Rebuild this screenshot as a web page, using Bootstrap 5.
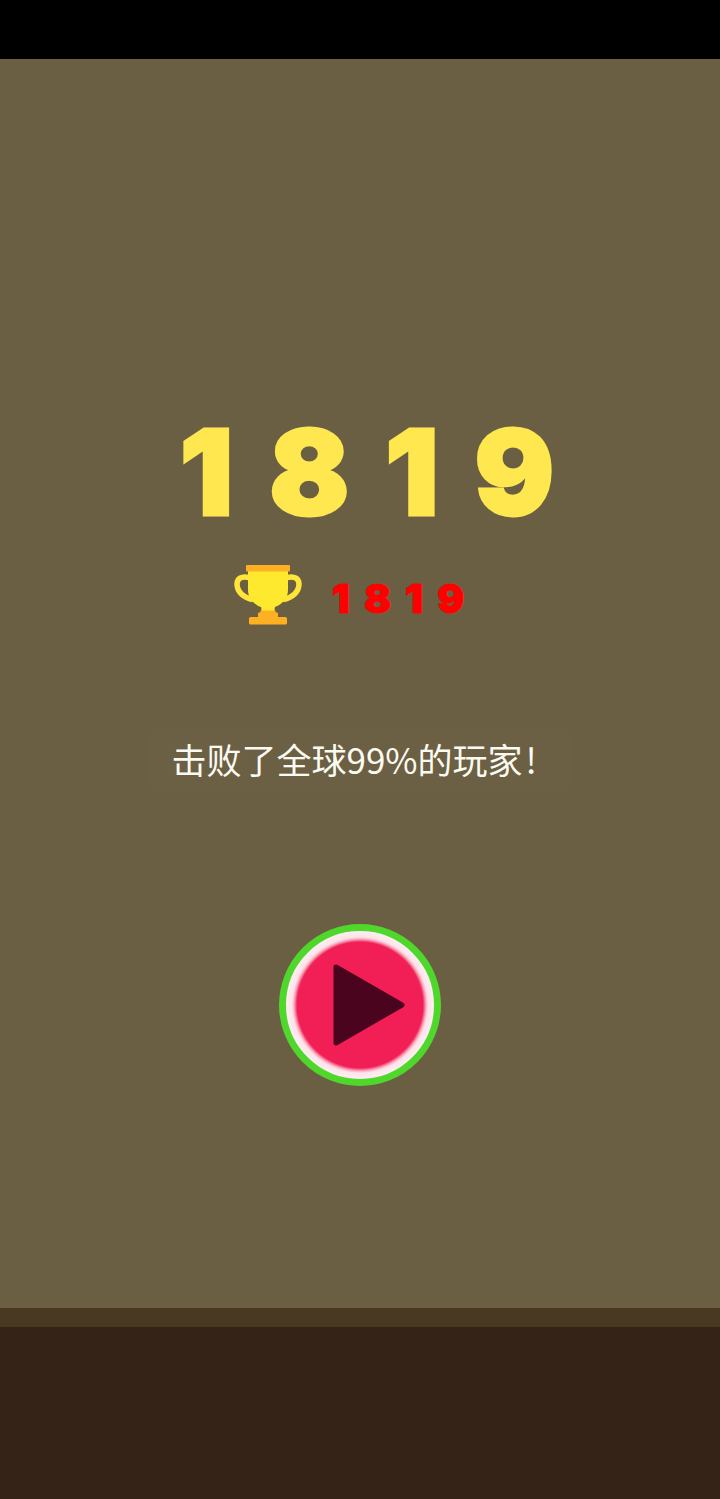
<!DOCTYPE html>
<html lang="zh">
<head>
<meta charset="utf-8">
<title>1819</title>
<link rel="stylesheet" href="https://cdn.jsdelivr.net/npm/bootstrap@5.3.0/dist/css/bootstrap.min.css">
<style>
html,body{height:100%;background:#000}
.game-screen{width:720px;height:1499px;overflow:hidden}
.top-strip{height:59px;background:#000}
.play-area{height:1249px;background:#6a5f42;padding-top:355px}
.band-mid{height:19px;background:#4a3922}
.band-low{height:172px;background:#352317}
.score-big{font-family:Inter,"Liberation Sans",sans-serif;font-weight:900;font-size:118px;line-height:116px;color:#ffe84f;letter-spacing:36px;margin-left:14px;margin-right:-36px;-webkit-text-stroke:3px #ffe84f}
.best-row{margin-top:36px;height:66px;gap:30px;padding-right:22px}
.best-num{font-family:Inter,"Liberation Sans",sans-serif;font-weight:900;font-size:40px;line-height:50px;color:#f00;letter-spacing:14px;margin-right:-14px;-webkit-text-stroke:1px #f00}
.trophy-icon{margin-top:-8px}
.rank-note{margin-top:102px;width:427px;height:52px;padding-left:25px;background:#6b6043;color:#fbfaf2;font-family:"Noto Sans CJK SC","Noto Sans",sans-serif;font-size:35px;line-height:50px;white-space:nowrap}
.bang-mark{margin-left:3px}
.play-btn{margin-top:138px;width:162px;height:162px;padding:0 0 0 18px;border:7px solid #4fd72c;border-radius:50%;background:radial-gradient(circle closest-side,#f21f57 0,#f21f57 85%,#f8a9bd 89%,#fce4ea 92%,#fdeef2 100%)}
.play-btn svg{display:block}
</style>
</head>
<body>
<div class="game-screen d-flex flex-column mx-auto">
  <div class="top-strip"></div>
  <main class="play-area d-flex flex-column align-items-center">
    <div class="score-big">1819</div>
    <div class="best-row d-flex align-items-center justify-content-center">
      <svg class="trophy-icon" width="68" height="62" viewBox="0 0 68 62" aria-hidden="true">
        <path d="M15 13.500C7 11.500 3 15 3 20C3 28 10 34 19 35.500" fill="none" stroke="#ffe43a" stroke-width="5.500"/>
        <path d="M53 13.500C61 11.500 65 15 65 20C65 28 58 34 49 35.500" fill="none" stroke="#ffe43a" stroke-width="5.500"/>
        <path d="M14 6H54V26C54 35 47 41 41 43C40.500 44 40.500 46 41 48H27C27.500 46 27.500 44 27 43C21 41 14 35 14 26Z" fill="#ffe92f"/>
        <rect x="12" y="1" width="44" height="6.500" rx="1" fill="#fdb022"/>
        <path d="M26.500 46.500H41.500V48L44 49V54H24V49L26.500 48Z" fill="#fdb022"/>
        <rect x="15" y="53" width="38" height="7.500" rx="1.500" fill="#fdb022"/>
      </svg>
      <div class="best-num">1819</div>
    </div>
    <div class="rank-note">击败了全球99%的玩家<span class="bang-mark">!</span></div>
    <button class="play-btn d-flex align-items-center justify-content-center" type="button" aria-label="开始游戏">
      <svg width="72" height="82" viewBox="0 0 72 82" aria-hidden="true">
        <path d="M3 3L69 41L3 79Z" fill="#4b041e" stroke="#4b041e" stroke-width="5" stroke-linejoin="round"/>
      </svg>
    </button>
  </main>
  <div class="band-mid"></div>
  <div class="band-low"></div>
</div>
<script src="https://cdn.jsdelivr.net/npm/bootstrap@5.3.0/dist/js/bootstrap.bundle.min.js"></script>
</body>
</html>
